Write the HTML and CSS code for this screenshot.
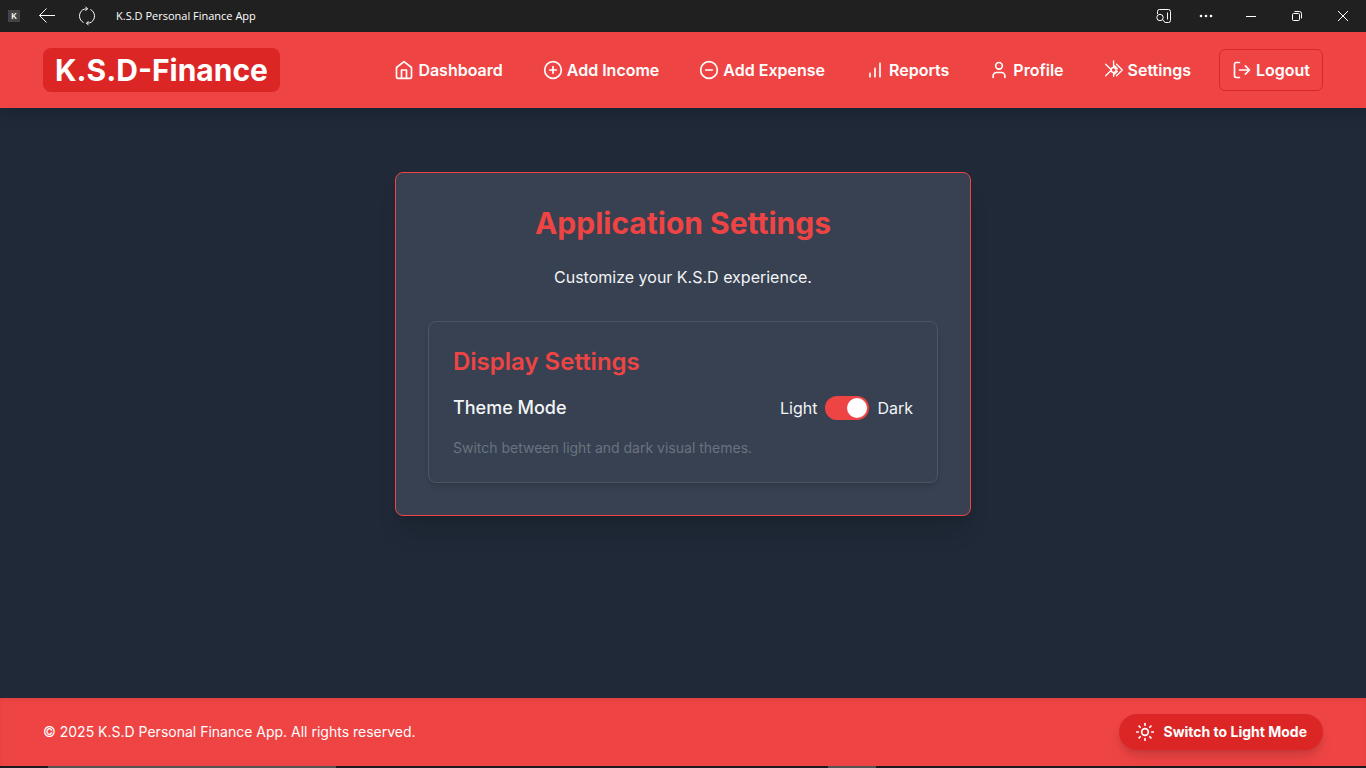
FILE: index.html
```html
<!DOCTYPE html>
<html lang="en">
<head>
<meta charset="utf-8">
<meta name="viewport" content="width=device-width, initial-scale=1">
<title>K.S.D Personal Finance App</title>
<link rel="stylesheet" href="styles.css">
</head>
<body>
<div class="titlebar">
  <div class="titlebar-left">
    <span class="app-badge">K</span>
    <button class="bar-button" type="button" aria-label="Back"><svg width="18" height="18" viewBox="0 0 18 18"><path d="M17 8.500H1.500M8.500 1.500l-7 7 7 7"/></svg></button>
    <button class="bar-button" type="button" aria-label="Refresh"><svg width="20" height="20" viewBox="0 0 20 20"><path d="M13.500 3.500A7.400 7.400 0 0 1 14.500 16M6.500 16.500A7.400 7.400 0 0 1 5.500 4M5.500 4Q7 2.800 10.500 2.800M8.500.8l2 2-2 2M14.500 16Q13 17.200 9.500 17.200M11.500 15.200l-2 2 2 2"/></svg></button>
    <span class="window-title">K.S.D Personal Finance App</span>
  </div>
  <div class="titlebar-right">
    <button class="bar-button bar-search" type="button" aria-label="Search in sidebar"><svg width="18" height="18" viewBox="0 0 18 18"><path d="M2.500 7V4.500a2 2 0 0 1 2-2h9a2 2 0 0 1 2 2v9a2 2 0 0 1-2 2h-3M12.500 5.500v7M7.500 12.500l3 3.500"/><circle cx="5" cy="10.500" r="3.200"/></svg></button>
    <button class="bar-button bar-more" type="button" aria-label="More"><svg width="18" height="18" viewBox="0 0 18 18"><g class="dots"><circle cx="4" cy="9" r="1.300"/><circle cx="9" cy="9" r="1.300"/><circle cx="14" cy="9" r="1.300"/></g></svg></button>
    <button class="bar-button" type="button" aria-label="Minimize"><svg width="18" height="18" viewBox="0 0 18 18"><path d="M4 9.500h10"/></svg></button>
    <button class="bar-button" type="button" aria-label="Restore"><svg width="18" height="18" viewBox="0 0 18 18"><rect x="4.500" y="6.500" width="7" height="7" rx="1"/><path d="M6.500 4.500h5a2 2 0 0 1 2 2v5"/></svg></button>
    <button class="bar-button" type="button" aria-label="Close"><svg width="18" height="18" viewBox="0 0 18 18"><path d="M4 4l10 10M14 4L4 14"/></svg></button>
  </div>
</div>

<header class="header">
  <div class="container">
    <a class="logo" href="#">K.S.D-Finance</a>
    <nav class="nav">
      <a class="nav-item" href="#"><svg class="icon" viewBox="0 0 24 24"><path d="M3 9l9-7 9 7v11a2 2 0 0 1-2 2H5a2 2 0 0 1-2-2z"/><path d="M9 22V12h6v10"/></svg>Dashboard</a>
      <a class="nav-item" href="#"><svg class="icon" viewBox="0 0 24 24"><circle cx="12" cy="12" r="10"/><path d="M8 12h8M12 8v8"/></svg>Add Income</a>
      <a class="nav-item" href="#"><svg class="icon" viewBox="0 0 24 24"><circle cx="12" cy="12" r="10"/><path d="M8 12h8"/></svg>Add Expense</a>
      <a class="nav-item" href="#"><svg class="icon" viewBox="0 0 24 24"><path d="M12 20V10M18 20V4M6 20v-4"/></svg>Reports</a>
      <a class="nav-item" href="#"><svg class="icon" viewBox="0 0 24 24"><path d="M19 21v-2a4 4 0 0 0-4-4H9a4 4 0 0 0-4 4v2"/><circle cx="12" cy="7" r="4"/></svg>Profile</a>
      <a class="nav-item" href="#"><svg class="icon icon-fine" viewBox="0 0 24 24"><path d="M11.500 1v7.500M11.500 15.500v4M2 5l7 7-7 7M15 5l7 7-7 7M12.500 7l3.500 3.500M12.500 17l3.500-3.500"/><circle cx="11.500" cy="12" r="3"/></svg>Settings</a>
      <button class="nav-item logout" type="button"><svg class="icon" viewBox="0 0 24 24"><path d="M9 21H5a2 2 0 0 1-2-2V5a2 2 0 0 1 2-2h4M16 17l5-5-5-5M21 12H9"/></svg>Logout</button>
    </nav>
  </div>
</header>

<main class="main">
  <section class="card">
    <h1 class="title">Application Settings</h1>
    <p class="subtitle">Customize your K.S.D experience.</p>
    <div class="panel">
      <h2 class="panel-title">Display Settings</h2>
      <div class="setting">
        <label class="setting-name" for="theme">Theme Mode</label>
        <div class="toggle-group">
          <span>Light</span>
          <input class="toggle" id="theme" type="checkbox" role="switch" checked>
          <span>Dark</span>
        </div>
      </div>
      <p class="hint">Switch between light and dark visual themes.</p>
    </div>
  </section>
</main>

<footer class="footer">
  <div class="container">
    <p class="copyright">© 2025 K.S.D Personal Finance App. All rights reserved.</p>
    <button class="theme-button" type="button"><svg class="icon" viewBox="0 0 24 24"><circle cx="12" cy="12" r="4"/><path d="M12 2v2M12 20v2M4.900 4.900l1.400 1.400M17.700 17.700l1.400 1.400M2 12h2M20 12h2M6.300 17.700l-1.400 1.400M19.100 4.900l-1.400 1.400"/></svg>Switch to Light Mode</button>
  </div>
</footer>
<div class="taskbar"><span class="task-window"></span><span class="task-active"></span></div>
</body>
</html>
```

FILE: styles.css
```css
*, *::before, *::after { box-sizing: border-box; }

body {
  margin: 0;
  min-height: 100vh;
  display: flex;
  flex-direction: column;
  background: #1f2937;
  color: #f3f4f6;
  font-family: Inter, "Liberation Sans", sans-serif;
  font-size: 16px;
  line-height: 24px;
}

h1, h2, p { margin: 0; }
button { font: inherit; color: inherit; cursor: pointer; }
svg { fill: none; stroke: currentColor; flex-shrink: 0; }

.icon {
  width: 20px;
  height: 20px;
  stroke-width: 2;
  stroke-linecap: round;
  stroke-linejoin: round;
}
.icon-fine { stroke-width: 1.6; }

.titlebar {
  height: 32px;
  display: flex;
  align-items: center;
  justify-content: space-between;
  background: #202020;
  color: #fff;
}
.titlebar-left { display: flex; align-items: center; padding-left: 8px; }
.titlebar-right { display: flex; align-items: center; }
.app-badge {
  width: 12px;
  height: 12px;
  margin-right: 7px;
  background: #444;
  font-size: 8px;
  font-weight: 600;
  line-height: 12px;
  text-align: center;
}
.bar-button {
  width: 40px;
  height: 32px;
  padding: 0;
  display: flex;
  align-items: center;
  justify-content: center;
  background: none;
  border: 0;
}
.titlebar-right .bar-button { width: 46px; }
.titlebar-right .bar-search { width: 40px; }
.titlebar-right .bar-more { width: 44px; }
.dots { fill: currentColor; stroke: none; }
.window-title {
  margin-left: 9px;
  font-family: "Open Sans", "Noto Sans", sans-serif;
  font-size: 11px;
  line-height: 16px;
}

.container {
  width: 100%;
  max-width: 1280px;
  margin: 0 auto;
  display: flex;
  align-items: center;
  justify-content: space-between;
}

.header {
  padding: 16px 0;
  background: #ef4444;
  color: #fff;
  box-shadow: 0 10px 15px -3px rgba(0, 0, 0, 0.1), 0 4px 6px -4px rgba(0, 0, 0, 0.1);
}
.logo {
  padding: 4px 12px;
  border-radius: 8px;
  background: #dc2626;
  color: #fff;
  font-size: 30px;
  font-weight: 700;
  line-height: 36px;
  text-decoration: none;
}
.nav { display: flex; align-items: center; gap: 16px; }
.nav-item {
  display: flex;
  align-items: center;
  gap: 4px;
  padding: 8px 12px;
  border-radius: 6px;
  color: #fff;
  font-weight: 600;
  text-decoration: none;
}
.logout { background: none; border: 1px solid #dc2626; }

.main { flex: 1; padding: 64px 16px; }
.card {
  max-width: 576px;
  margin: 0 auto;
  padding: 32px;
  border: 1px solid #ef4444;
  border-radius: 8px;
  background: #374151;
  box-shadow: 0 20px 25px -5px rgba(0, 0, 0, 0.1), 0 8px 10px -6px rgba(0, 0, 0, 0.1);
}
.title {
  margin-bottom: 24px;
  color: #ef4444;
  font-size: 30px;
  font-weight: 700;
  line-height: 36px;
  text-align: center;
}
.subtitle { margin-bottom: 32px; text-align: center; }
.panel {
  padding: 24px;
  border: 1px solid #4b5563;
  border-radius: 8px;
  box-shadow: 0 4px 6px -1px rgba(0, 0, 0, 0.1), 0 2px 4px -2px rgba(0, 0, 0, 0.1);
}
.panel-title {
  margin-bottom: 16px;
  color: #ef4444;
  font-size: 24px;
  font-weight: 600;
  line-height: 32px;
}
.setting {
  display: flex;
  align-items: center;
  justify-content: space-between;
  margin-bottom: 16px;
}
.setting-name { font-size: 18px; font-weight: 500; line-height: 28px; }
.toggle-group { display: flex; align-items: center; gap: 8px; }
.toggle {
  appearance: none;
  width: 44px;
  height: 24px;
  margin: 0;
  padding: 2px;
  display: flex;
  border-radius: 12px;
  background: #6b7280;
}
.toggle::before {
  content: "";
  width: 20px;
  height: 20px;
  border-radius: 50%;
  background: #fff;
}
.toggle:checked { justify-content: flex-end; background: #ef4444; }
.hint { color: #6b7280; font-size: 14px; line-height: 20px; }

.footer {
  padding: 16px 0;
  background: #ef4444;
  color: #fff;
  box-shadow: inset 0 2px 4px rgba(0, 0, 0, 0.06);
}
.copyright { font-size: 14px; line-height: 20px; }
.theme-button {
  display: flex;
  align-items: center;
  gap: 8px;
  padding: 8px 16px;
  border: 0;
  border-radius: 18px;
  background: #dc2626;
  font-size: 14px;
  font-weight: 700;
  line-height: 20px;
  box-shadow: 0 4px 6px -1px rgba(0, 0, 0, 0.1), 0 10px 15px -3px rgba(0, 0, 0, 0.1);
}

.taskbar {
  height: 2px;
  padding-left: 48px;
  display: flex;
  gap: 492px;
  background: #1a1a1f;
}
.task-window { width: 288px; background: #555; }
.task-active { width: 48px; background: #555; }
```
